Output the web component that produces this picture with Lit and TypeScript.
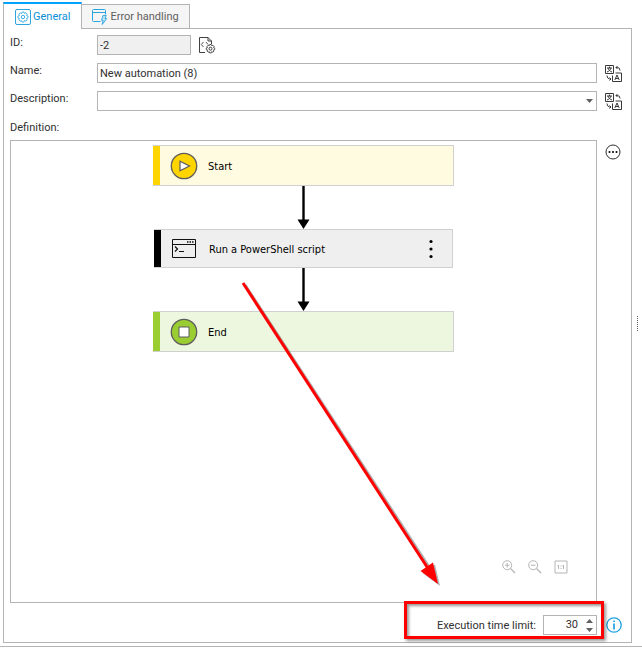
import { LitElement, html, css, svg } from "lit";
import { customElement, state } from "lit/decorators.js";

const gearIcon = html`<svg width="16" height="16" viewBox="0 0 16 16" fill="none" stroke="#2aa5e0">
  <rect x="0.5" y="0.5" width="15" height="15" rx="1.5" />
  <path d="M7 3h2l.4 1.5 1.5-.7 1.3 1.3-.7 1.5L13 7v2l-1.5.4.7 1.5-1.3 1.3-1.5-.7L9 13H7l-.4-1.5-1.5.7-1.3-1.3.7-1.5L3 9V7l1.5-.4-.7-1.5 1.3-1.3 1.5.7z" stroke-width=".8" />
  <circle cx="8" cy="8" r="1.7" stroke-width=".9" />
</svg>`;

const errorIcon = html`<svg width="16" height="16" viewBox="0 0 16 16" fill="none" stroke="#2aa5e0">
  <path d="M8.500 12.500h-7a1 1 0 0 1-1-1v-10a1 1 0 0 1 1-1h11a1 1 0 0 1 1 1v4M.5 3.500h13" />
  <path d="M11 6.500h3.200l-1.200 3h1.700l-4.500 6 .8-4.200H9.500z" stroke-width=".9" fill="#bfe4f7" />
</svg>`;

const codeIcon = html`<svg width="17" height="17" viewBox="0 0 17 17" fill="none" stroke="#404040">
  <path d="M6 15.500H.5V.5h8.500l3.500 3.500v3M9 .5V4h3.500" />
  <path d="M4.500 5 2.300 7.500l2.200 2.500M7 5l2 2.500" stroke-width=".9" />
  <path d="M10.700 7.500h1.600l.4 1.200 1.200-.5 1.100 1.100-.5 1.200 1.200.4v1.600l-1.200.4.5 1.200-1.100 1.100-1.200-.5-.4 1.200h-1.600l-.4-1.200-1.200.5L8 14.100l.5-1.200-1.200-.4v-1.600l1.200-.4L8 9.300l1.100-1.100 1.200.5z" stroke-width=".9" />
  <circle cx="11.500" cy="11.700" r="1.500" />
</svg>`;

const translateIcon = html`<svg width="17" height="17" viewBox="0 0 17 17" fill="none" stroke="#383838">
  <path d="M.5.5h8v8h-8zM7.500 10.500v6h9v-8.500h-6" />
  <path d="M2 3h5M4.500 1.500V3M3 3c.3 1.700 2 3.300 4 4M6 3C5.700 4.700 4 6.300 2 7" />
  <path d="m9.800 15 2.200-5 2.200 5M10.500 13.500h3" />
  <path d="M11 2.500h1.500q2.500 0 2.500 3M12.500 1 11 2.500 12.500 4M2 10.500q0 3 2.500 3.500H6M4.500 12.500 6 14l-1.500 1.500" />
</svg>`;

const moreIcon = html`<svg width="16" height="16" viewBox="0 0 16 16">
  <circle cx="8" cy="8" r="7" fill="none" stroke="#303030" />
  <circle cx="4.500" cy="8" r="1" /><circle cx="8" cy="8" r="1" /><circle cx="11.500" cy="8" r="1" />
</svg>`;

const startIcon = html`<svg width="28" height="28" viewBox="0 0 28 28" stroke="#5c5c5c">
  <circle cx="14" cy="14" r="12.700" fill="#ffd500" stroke-width="1.300" />
  <path d="M10 9.300v9.400L19.500 14z" fill="#fff" stroke-width="1.200" />
</svg>`;

const endIcon = html`<svg width="28" height="28" viewBox="0 0 28 28" stroke="#5c5c5c">
  <circle cx="14" cy="14" r="12.700" fill="#9acd32" stroke-width="1.300" />
  <path d="M9 9h10v10H9z" fill="#fff" />
</svg>`;

const shellIcon = html`<svg width="28" height="28" viewBox="0 0 28 28" fill="none" stroke="#101010">
  <path d="M1.500 4.500h23v18h-23zM1.500 9.500h23" />
  <path d="M16 7h1.500M18.500 7H20M21 7h1.500" stroke-width="1.500" />
  <path d="m4 11.500 2.500 2.500L4 16.500M8 16.500h5" stroke-width="1.200" />
</svg>`;

const connector = html`<svg width="13" height="43" viewBox="0 0 13 43">
  <path d="M5.300 0h2.400v34H5.300z" /><path d="M.5 33.500h12L6.500 43z" />
</svg>`;

const lens = (plus: boolean) => html`<svg width="14" height="14" viewBox="0 0 14 14" fill="none" stroke="#b4b4b4">
  <circle cx="5.200" cy="5.200" r="4.500" />
  <path d="M8.500 8.500 13 13" stroke-width="1.300" />
  <path d="M3 5.200h4.500" />${plus ? svg`<path d="M5.200 3v4.500" />` : null}
</svg>`;

const fitIcon = html`<svg width="14" height="14" viewBox="0 0 14 14" fill="none" stroke="#b4b4b4">
  <path d="M1 1h12v12H1zM4.500 5v4M9.500 5v4M3.500 5.500h1M8.500 5.500h1M7 5.500v1M7 8v1" />
</svg>`;

const infoIcon = html`<svg width="16" height="16" viewBox="0 0 16 16" fill="none" stroke="#1ba1e2">
  <circle cx="8" cy="8" r="7.200" stroke-width="1.300" />
  <path d="M8 6.500v6M8 3.500v1.500" stroke-width="1.700" />
</svg>`;

@customElement("app-root")
export class AppRoot extends LitElement {
  @state() private tab = "general";
  @state() private limit = 30;

  static styles = css`
    :host {
      display: flex;
      flex-direction: column;
      box-sizing: border-box;
      min-height: 100vh;
      padding: 2px 0 11px;
      background: #fff;
      color: #303030;
      font: 11px/14px Roboto, "Noto Sans", sans-serif;
    }
    * { box-sizing: border-box; }
    svg { display: block; flex: none; }
    button, input, select { font: inherit; color: inherit; margin: 0; border-radius: 0; }
    button { border: 0; padding: 0; background: none; }
    .main { flex: 1; display: flex; padding-left: 3px; border-bottom: 1px solid #b4b4b4; }
    .content { flex: 1; min-width: 0; display: flex; flex-direction: column; padding-bottom: 3px; }
    .tabs { display: flex; align-items: flex-end; position: relative; z-index: 1; margin-bottom: -1px; }
    .tab {
      display: flex; align-items: center; gap: 2px; height: 25px; padding: 0 10px;
      border: 1px solid #b4b4b4; border-left: 0; background: #f5f5f5; color: #606060;
    }
    .tab.active {
      height: 27px; padding: 0 11px; background: #fff; color: #0a8fd6;
      border: solid #b4b4b4; border-width: 2px 1px 0; border-top-color: #00a2ff;
    }
    .panel { flex: 1; display: flex; flex-direction: column; gap: 8px; border: 1px solid #b4b4b4; padding: 6px 0 7px 6px; }
    .row { display: grid; grid-template-columns: 87px minmax(0, 1fr) 34px; height: 20px; }
    .caption { line-height: 16px; }
    .definition { height: 13px; line-height: 18px; }
    .field { width: 100%; height: 20px; border: 1px solid #b4b4b4; padding: 0 2px; background: #fff; outline: 0; }
    .id { display: flex; }
    .id .field { width: 94px; background: #f0f0f0; }
    .tool { display: flex; align-items: center; width: 17px; height: 20px; margin-left: 8px; }
    .combo { position: relative; }
    .combo select { appearance: none; }
    .combo svg { position: absolute; right: 4px; top: 8px; pointer-events: none; }
    .work { flex: 1; display: flex; }
    .canvas { flex: 1; position: relative; border: 1px solid #b4b4b4; }
    .side { width: 34px; padding-top: 2px; }
    .flow {
      display: flex; flex-direction: column; align-items: center; padding-top: 4px; color: #000;
      font-family: "DejaVu Sans Condensed", "Noto Sans", sans-serif;
    }
    .step {
      display: flex; align-items: center; gap: 10px; width: 301px; height: 41px; padding: 1px 17px 0;
      border: 1px solid #d0d0d0; border-left: 0; box-shadow: inset 7px 0 var(--accent);
    }
    .start { background: #fffbe0; --accent: #ffd500; }
    .script { width: 299px; height: 39px; background: #efefef; --accent: #000; }
    .end { background: #edf6de; --accent: #9acd32; }
    .name { flex: 1; padding-top: 2px; }
    .zoom { position: absolute; right: 28px; bottom: 28px; display: flex; gap: 12px; }
    .pointer { position: absolute; right: 150px; bottom: 10px; pointer-events: none; }
    .footer { display: flex; justify-content: flex-end; align-items: center; height: 20px; margin-top: 4px; padding-right: 9px; gap: 9px; }
    .limit { display: flex; align-items: center; gap: 7px; position: relative; }
    .limit::after {
      content: ""; position: absolute; inset: -14px -7px -4px -33px;
      border: 3px solid #f00; box-shadow: 2px 2px 3px #0006, inset 2px 2px 3px #0006; pointer-events: none;
    }
    .limit label { padding-top: 2px; }
    .spin { display: flex; width: 54px; height: 20px; border: 1px solid #b4b4b4; }
    .spin input { flex: 1; min-width: 0; border: 0; padding: 0 4px 0 0; text-align: right; appearance: textfield; outline: 0; background: none; }
    .spin input::-webkit-inner-spin-button { appearance: none; }
    .arrows { display: flex; flex-direction: column; width: 14px; }
    .arrows button { flex: 1; display: flex; align-items: center; justify-content: center; }
    .splitter { width: 10px; display: flex; align-items: center; justify-content: center; }
    .grip { width: 1px; height: 16px; background: repeating-linear-gradient(#606060 0 1px, #fff 1px 2px); }
  `;

  render() {
    return html`
      <div class="main">
        <div class="content">
          <div class="tabs" role="tablist">
            <button class="tab ${this.tab === "general" ? "active" : ""}" role="tab" @click=${() => (this.tab = "general")}>${gearIcon}General</button>
            <button class="tab ${this.tab === "errors" ? "active" : ""}" role="tab" @click=${() => (this.tab = "errors")}>${errorIcon}Error handling</button>
          </div>
          <div class="panel">
            <div class="row">
              <label class="caption" for="id">ID:</label>
              <div class="id">
                <input class="field" id="id" value="-2" readonly />
                <button class="tool" aria-label="Field properties">${codeIcon}</button>
              </div>
            </div>
            <div class="row">
              <label class="caption" for="name">Name:</label>
              <input class="field" id="name" value="New automation (8)" />
              <button class="tool" aria-label="Translate name">${translateIcon}</button>
            </div>
            <div class="row">
              <label class="caption" for="description">Description:</label>
              <div class="combo">
                <select class="field" id="description"><option></option></select>
                <svg width="7" height="4" viewBox="0 0 7 4"><path d="M0 0h7L3.500 4z" fill="#606060" /></svg>
              </div>
              <button class="tool" aria-label="Translate description">${translateIcon}</button>
            </div>
            <div class="definition">Definition:</div>
            <div class="work">
              <div class="canvas">
                <div class="flow">
                  <div class="step start">${startIcon}<span class="name">Start</span></div>
                  ${connector}
                  <div class="step script">
                    ${shellIcon}<span class="name">Run a PowerShell script</span>
                    <button aria-label="Step menu">
                      <svg width="8" height="20" viewBox="0 0 8 20"><circle cx="4" cy="2.500" r="1.600" /><circle cx="4" cy="10" r="1.600" /><circle cx="4" cy="17.500" r="1.600" /></svg>
                    </button>
                  </div>
                  ${connector}
                  <div class="step end">${endIcon}<span class="name">End</span></div>
                </div>
                <div class="zoom">
                  <button aria-label="Zoom in">${lens(true)}</button>
                  <button aria-label="Zoom out">${lens(false)}</button>
                  <button aria-label="Actual size">${fitIcon}</button>
                </div>
                <svg class="pointer" width="210" height="314" viewBox="0 0 210 314">
                  <g transform="translate(2 2)" opacity=".3">
                    <path d="M7 5 193 290" stroke="#000" stroke-width="3" /><path d="m202 306-17.500-13 12.500-8.500z" />
                  </g>
                  <path d="M7 5 193 292" stroke="#f00" stroke-width="3" /><path d="m202 306-17.500-13 12.500-8.500z" fill="#f00" />
                </svg>
              </div>
              <div class="side"><button class="tool" aria-label="More actions">${moreIcon}</button></div>
            </div>
            <div class="footer">
              <div class="limit">
                <label for="limit">Execution time limit:</label>
                <div class="spin">
                  <input id="limit" type="number" .value=${String(this.limit)} @change=${(e: Event) => (this.limit = Number((e.target as HTMLInputElement).value))} />
                  <div class="arrows">
                    <button aria-label="Increase" @click=${() => this.limit++}><svg width="7" height="4" viewBox="0 0 7 4"><path d="M0 4h7L3.500 0z" fill="#606060" /></svg></button>
                    <button aria-label="Decrease" @click=${() => this.limit--}><svg width="7" height="4" viewBox="0 0 7 4"><path d="M0 0h7L3.500 4z" fill="#606060" /></svg></button>
                  </div>
                </div>
              </div>
              <button aria-label="Information">${infoIcon}</button>
            </div>
          </div>
        </div>
        <div class="splitter"><div class="grip"></div></div>
      </div>
    `;
  }
}
